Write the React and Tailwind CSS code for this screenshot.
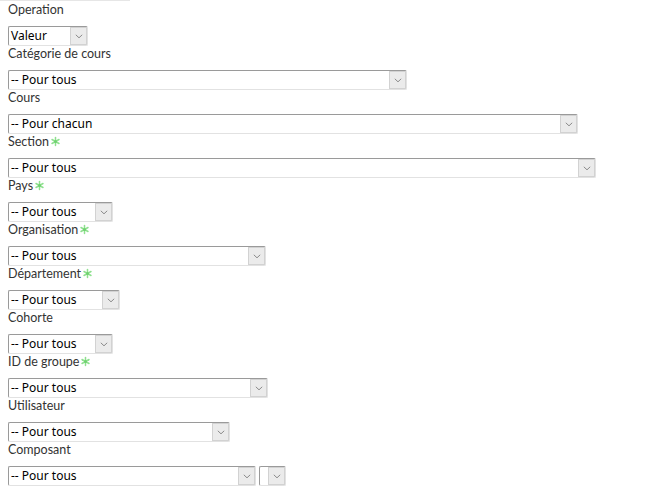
import React from "react";

const Star = () => (
  <svg width="11" height="11" viewBox="0 0 11 11" className="inline-block ml-[1px] -mt-[3px] align-middle">
    <g stroke="#8fe08f" strokeWidth="1.5" strokeLinecap="round">
      <line x1="5.5" y1="1.5" x2="5.5" y2="9.5" />
      <line x1="2" y1="3.5" x2="9" y2="7.5" />
      <line x1="2" y1="7.5" x2="9" y2="3.5" />
    </g>
    <circle cx="5.5" cy="5.5" r="1.5" fill="#6fd16f" />
  </svg>
);

const Chevron = () => (
  <svg width="8" height="5" viewBox="0 0 8 5">
    <path d="M0.8 0.8 L4 3.8 L7.2 0.8" fill="none" stroke="#8a8a8a" strokeWidth="1" />
  </svg>
);

const Select = ({ w, text }) => (
  <div
    className={`flex h-[20px] rounded-[2px] border border-t-[#9a9a9a] border-l-[#9a9a9a] border-b-[#e2e2e2] border-r-[#e2e2e2] bg-white ${w}`}
  >
    <span
      className="flex-1 overflow-hidden whitespace-nowrap pl-[2px] text-[12px] leading-[18px] text-black"
      style={{ fontFamily: '"Noto Sans", sans-serif' }}
    >
      {text}
    </span>
    <span className="flex w-[17px] items-center justify-center border border-[#d2d2d2] bg-[#ebebeb]">
      <Chevron />
    </span>
  </div>
);

const Row = ({ label, star, children }) => (
  <div className="flex flex-col">
    <div className="h-[18px] text-[12.5px] leading-[18px] text-[#333]" style={{ fontFamily: 'Lato, "Noto Sans", sans-serif' }}>
      {label}
      {star && <Star />}
    </div>
    <div className="mt-[7px] h-[19px] flex gap-[3px]">{children}</div>
  </div>
);

export default function App() {
  return (
    <div className="relative w-[648px] h-[488px] bg-white overflow-hidden">
      <div className="absolute left-0 top-0 h-px w-[130px] bg-[#e6e6e6]" />
      <div className="flex flex-col pl-[8px] pt-[1px]">
        <Row label="Operation"><Select w="w-[80px]" text="Valeur" /></Row>
        <Row label="Catégorie de cours"><Select w="w-[399px]" text="-- Pour tous" /></Row>
        <Row label="Cours"><Select w="w-[570px]" text="-- Pour chacun" /></Row>
        <Row label="Section" star><Select w="w-[588px]" text="-- Pour tous" /></Row>
        <Row label="Pays" star><Select w="w-[105px]" text="-- Pour tous" /></Row>
        <Row label="Organisation" star><Select w="w-[258px]" text="-- Pour tous" /></Row>
        <Row label="Département" star><Select w="w-[112px]" text="-- Pour tous" /></Row>
        <Row label="Cohorte"><Select w="w-[105px]" text="-- Pour tous" /></Row>
        <Row label="ID de groupe" star><Select w="w-[260px]" text="-- Pour tous" /></Row>
        <Row label="Utilisateur"><Select w="w-[222px]" text="-- Pour tous" /></Row>
        <Row label="Composant">
          <Select w="w-[248px]" text="-- Pour tous" />
          <Select w="w-[27px]" text="" />
        </Row>
      </div>
    </div>
  );
}
